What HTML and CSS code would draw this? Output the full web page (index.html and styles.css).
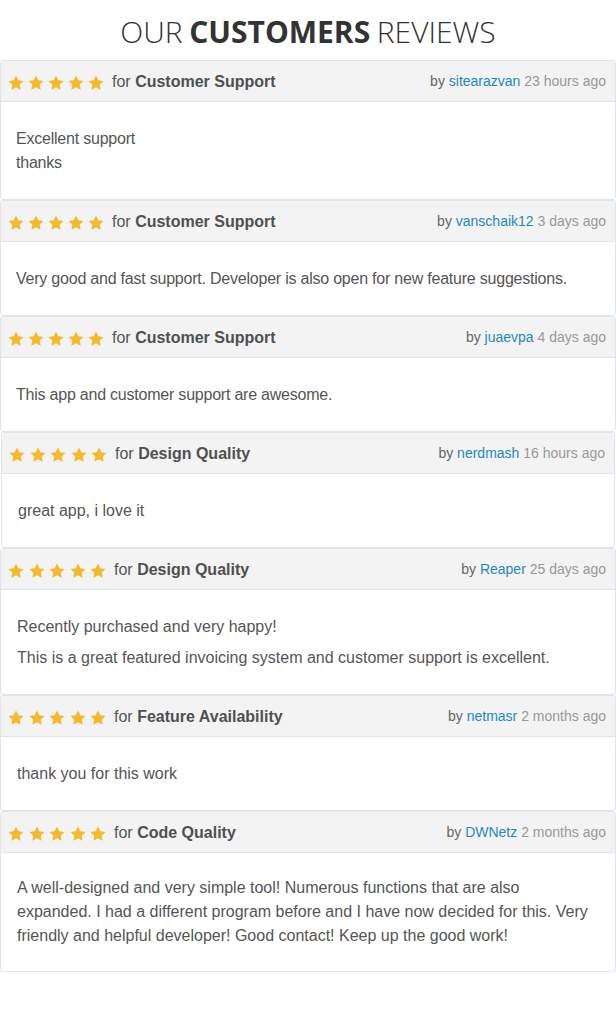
FILE: index.html
```html
<!DOCTYPE html>
<html lang="en">
<head>
<meta charset="utf-8">
<title>Our Customers Reviews</title>
<link rel="stylesheet" href="styles.css">
</head>
<body>
<svg class="defs" width="0" height="0" aria-hidden="true">
  <defs>
    <polygon id="star" points="12,2 15.09,8.26 22,9.27 17,14.14 18.18,21.02 12,17.77 5.82,21.02 7,14.14 2,9.27 8.91,8.26"/>
  </defs>
</svg>
<main class="page">
  <h1 class="title">OUR <strong>CUSTOMERS</strong> REVIEWS</h1>

  <section class="reviews">
    <article class="review">
      <header class="review-head">
        <div class="rating">
          <span class="stars"><svg viewBox="0 0 24 24"><use href="#star"/></svg><svg viewBox="0 0 24 24"><use href="#star"/></svg><svg viewBox="0 0 24 24"><use href="#star"/></svg><svg viewBox="0 0 24 24"><use href="#star"/></svg><svg viewBox="0 0 24 24"><use href="#star"/></svg></span>
          <span class="for">for <b>Customer Support</b></span>
        </div>
        <div class="meta">by <a class="user">sitearazvan</a> <span class="time">23 hours ago</span></div>
      </header>
      <div class="review-body">
        <p>Excellent support<br>thanks</p>
      </div>
    </article>

    <article class="review">
      <header class="review-head">
        <div class="rating">
          <span class="stars"><svg viewBox="0 0 24 24"><use href="#star"/></svg><svg viewBox="0 0 24 24"><use href="#star"/></svg><svg viewBox="0 0 24 24"><use href="#star"/></svg><svg viewBox="0 0 24 24"><use href="#star"/></svg><svg viewBox="0 0 24 24"><use href="#star"/></svg></span>
          <span class="for">for <b>Customer Support</b></span>
        </div>
        <div class="meta">by <a class="user">vanschaik12</a> <span class="time">3 days ago</span></div>
      </header>
      <div class="review-body">
        <p>Very good and fast support. Developer is also open for new feature suggestions.</p>
      </div>
    </article>

    <article class="review">
      <header class="review-head">
        <div class="rating">
          <span class="stars"><svg viewBox="0 0 24 24"><use href="#star"/></svg><svg viewBox="0 0 24 24"><use href="#star"/></svg><svg viewBox="0 0 24 24"><use href="#star"/></svg><svg viewBox="0 0 24 24"><use href="#star"/></svg><svg viewBox="0 0 24 24"><use href="#star"/></svg></span>
          <span class="for">for <b>Customer Support</b></span>
        </div>
        <div class="meta">by <a class="user">juaevpa</a> <span class="time">4 days ago</span></div>
      </header>
      <div class="review-body">
        <p>This app and customer support are awesome.</p>
      </div>
    </article>

    <article class="review shifted wide">
      <header class="review-head">
        <div class="rating">
          <span class="stars"><svg viewBox="0 0 24 24"><use href="#star"/></svg><svg viewBox="0 0 24 24"><use href="#star"/></svg><svg viewBox="0 0 24 24"><use href="#star"/></svg><svg viewBox="0 0 24 24"><use href="#star"/></svg><svg viewBox="0 0 24 24"><use href="#star"/></svg></span>
          <span class="for">for <b>Design Quality</b></span>
        </div>
        <div class="meta">by <a class="user">nerdmash</a> <span class="time">16 hours ago</span></div>
      </header>
      <div class="review-body">
        <p>great app, i love it</p>
      </div>
    </article>

    <article class="review wide">
      <header class="review-head">
        <div class="rating">
          <span class="stars"><svg viewBox="0 0 24 24"><use href="#star"/></svg><svg viewBox="0 0 24 24"><use href="#star"/></svg><svg viewBox="0 0 24 24"><use href="#star"/></svg><svg viewBox="0 0 24 24"><use href="#star"/></svg><svg viewBox="0 0 24 24"><use href="#star"/></svg></span>
          <span class="for">for <b>Design Quality</b></span>
        </div>
        <div class="meta">by <a class="user">Reaper</a> <span class="time">25 days ago</span></div>
      </header>
      <div class="review-body">
        <p>Recently purchased and very happy!</p>
        <p>This is a great featured invoicing system and customer support is excellent.</p>
      </div>
    </article>

    <article class="review wide">
      <header class="review-head">
        <div class="rating">
          <span class="stars"><svg viewBox="0 0 24 24"><use href="#star"/></svg><svg viewBox="0 0 24 24"><use href="#star"/></svg><svg viewBox="0 0 24 24"><use href="#star"/></svg><svg viewBox="0 0 24 24"><use href="#star"/></svg><svg viewBox="0 0 24 24"><use href="#star"/></svg></span>
          <span class="for">for <b>Feature Availability</b></span>
        </div>
        <div class="meta">by <a class="user">netmasr</a> <span class="time">2 months ago</span></div>
      </header>
      <div class="review-body">
        <p>thank you for this work</p>
      </div>
    </article>

    <article class="review wide tight">
      <header class="review-head">
        <div class="rating">
          <span class="stars"><svg viewBox="0 0 24 24"><use href="#star"/></svg><svg viewBox="0 0 24 24"><use href="#star"/></svg><svg viewBox="0 0 24 24"><use href="#star"/></svg><svg viewBox="0 0 24 24"><use href="#star"/></svg><svg viewBox="0 0 24 24"><use href="#star"/></svg></span>
          <span class="for">for <b>Code Quality</b></span>
        </div>
        <div class="meta">by <a class="user">DWNetz</a> <span class="time">2 months ago</span></div>
      </header>
      <div class="review-body">
        <p>A well-designed and very simple tool! Numerous functions that are also<br>expanded. I had a different program before and I have now decided for this. Very<br>friendly and helpful developer! Good contact! Keep up the good work!</p>
      </div>
    </article>
  </section>
</main>
</body>
</html>
```

FILE: styles.css
```css
html, body {
  margin: 0;
  padding: 0;
  background: #ffffff;
}

.defs {
  position: absolute;
  width: 0;
  height: 0;
  overflow: hidden;
}

.page {
  width: 616px;
  font-family: "Liberation Sans", Arial, sans-serif;
  color: #555555;
}

.title {
  margin: 0;
  height: 60px;
  display: flex;
  align-items: center;
  justify-content: center;
  font-family: "Open Sans", sans-serif;
  font-weight: 300;
  font-size: 30px;
  color: #333333;
  padding-top: 2px;
  box-sizing: border-box;
}

.title strong {
  font-weight: 700;
  margin: 0 0.22em;
}

.reviews {
  display: flex;
  flex-direction: column;
}

.review {
  border: 1px solid #dfe5eb;
  border-radius: 3px;
  background: #ffffff;
  width: 616px;
  box-sizing: border-box;
}

.review.shifted {
  margin-left: 1px;
  width: 614px;
}

.review-head {
  height: 41px;
  box-sizing: border-box;
  background: #f3f3f3;
  border-bottom: 1px solid #dfe5eb;
  display: flex;
  align-items: center;
  justify-content: space-between;
  padding: 0 9px 0 6px;
}

.rating {
  display: flex;
  align-items: center;
  gap: 7px;
  padding-top: 2px;
}

.stars {
  display: flex;
  gap: 2px;
  padding-top: 1px;
}

.wide .stars {
  gap: 2.5px;
}

.stars svg {
  width: 18px;
  height: 18px;
  fill: #f6b82c;
  display: block;
}

.for {
  font-size: 16px;
  color: #555555;
}

.for b {
  font-weight: 700;
  color: #505050;
}

.meta {
  font-size: 14px;
  color: #666666;
  padding-bottom: 1px;
}

.user {
  color: #1f8ac0;
  text-decoration: none;
}

.time {
  color: #999999;
}

.review-body {
  padding: 25px 16px 24px 15px;
  font-size: 16px;
  line-height: 24px;
  letter-spacing: -0.22px;
  color: #555555;
}

.wide .review-body {
  padding-left: 16px;
  letter-spacing: 0;
}

.tight .review-body {
  padding-top: 23px;
  padding-bottom: 23px;
}

.review-body p {
  margin: 0;
}

.review-body p + p {
  margin-top: 7px;
}
```
